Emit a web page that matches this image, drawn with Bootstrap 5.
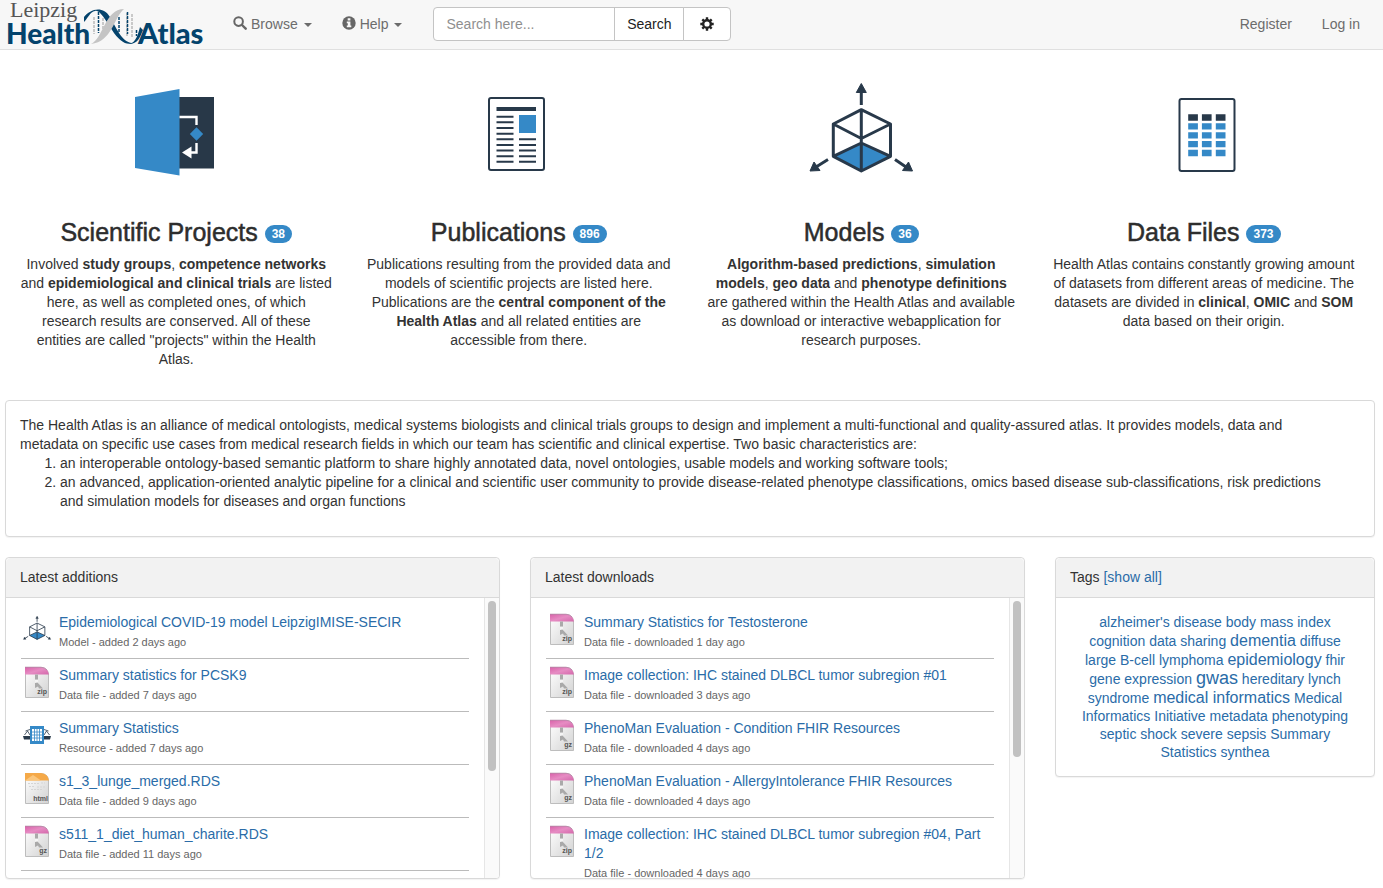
<!DOCTYPE html>
<html lang="en">
<head>
<meta charset="utf-8">
<meta name="viewport" content="width=device-width, initial-scale=1">
<title>Leipzig Health Atlas</title>
<link href="https://cdn.jsdelivr.net/npm/bootstrap@5.3.0/dist/css/bootstrap.min.css" rel="stylesheet">
<style>
  body { font-family: "Liberation Sans", Arial, sans-serif; font-size: 14px; line-height: 19px; color: #333; background: #fff; }
  a { color: #2a6ca8; text-decoration: none; }
  a:hover { text-decoration: underline; }
  .site-bar { background: #f7f7f7; border-bottom: 1px solid #e0e0e0; padding: 0 8px 1px 5px; min-height: 50px; }
  .site-bar .navbar-brand { padding: 0; margin: 0 13px 0 0; }
  .site-bar .navbar-brand svg { overflow: visible; }
  .site-bar .navbar-nav .nav-link { color: #6c6c6c; padding: 14px 15px; line-height: 20px; }
  .site-bar .nav-link svg { margin-right: 4px; vertical-align: -1px; }
  .site-bar .dropdown-toggle::after { border-top-width: 4px; border-right-width: 4px; border-left-width: 4px; margin-left: 6px; vertical-align: 2px; }
  .site-search { margin-left: 16px; width: 298px; }
  .site-search .form-control { height: 34px; font-size: 14px; padding: 6px 12px; border-color: #c4c4c4; border-radius: 4px; }
  .site-search .form-control::placeholder { color: #8f8f8f; }
  .site-search .btn { font-size: 14px; line-height: 20px; padding: 6px 12px; color: #222; background: #fff; border-color: #c4c4c4; border-radius: 4px; }
  .site-search .btn-gear { padding: 6px 16px; }
  .page-area { padding: 22px 8px 8px 5px; }
  .wide-row { --bs-gutter-x: 30px; }
  .area-icon { display: block; width: 120px; height: 120px; margin: 0 auto 26px; }
  .area-title { font-size: 25px; line-height: 28px; font-weight: 500; margin: 0 0 9px; color: #2d2d2d; -webkit-text-stroke: .5px #2d2d2d; }
  .count-badge { font-size: 12px; line-height: 12px; padding: 3px 7px; background: #3589c7; border-radius: 10px; vertical-align: 3px; -webkit-text-stroke: 0; }
  .area-text { padding: 0 15px; margin: 0 0 31px; }
  .panel-card { border: 1px solid #d9d9d9; border-radius: 4px; box-shadow: 0 1px 1px rgba(0,0,0,.05); overflow: hidden; }
  .panel-card .card-header { background: #f2f2f2; border-bottom: 1px solid #d9d9d9; padding: 10px 14px; }
  .panel-card .card-body { padding: 15px 14px; }
  .panel-card .intro-body { padding-right: 34px; }
  .intro-body ol { padding-left: 40px; margin-bottom: 10px; }
  .feed { height: 280px; }
  .feed-list { flex: 1; min-width: 0; overflow-y: auto; scrollbar-width: none; padding: 8px 15px 0; }
  .feed-bar { width: 15px; background: #fafafa; border-left: 1px solid #e6e6e6; padding: 3px; }
  .feed-thumb { width: 8px; height: 62%; background: #c1c1c1; border-radius: 4px; }
  .feed-thumb-short { height: 57%; }
  .feed-item { display: flex; gap: 6px; padding: 7px 0 5px; border-bottom: 1px solid #bbb; }
  .feed-item svg { flex: none; width: 32px; height: 34px; margin-top: -1px; }
  .feed-meta { font-size: 11px; line-height: 21px; color: #666; display: block; }
  .panel-card .tag-cloud { line-height: 18px; text-align: center; padding: 15px 20px; }
  .tag-m { font-size: 16px; line-height: 19px; }
  .tag-l { font-size: 18px; line-height: 18px; }
</style>
</head>
<body>

<svg width="0" height="0" class="position-absolute" aria-hidden="true">
  <defs>
    <linearGradient id="paper" x1="0" y1="0" x2="1" y2="1"><stop offset="0" stop-color="#fff"/><stop offset="1" stop-color="#d2d2d2"/></linearGradient>
    <linearGradient id="pink" x1="0" y1="0" x2="1" y2="1"><stop offset="0" stop-color="#d860a8"/><stop offset=".5" stop-color="#e68cc3"/><stop offset="1" stop-color="#d468ab"/></linearGradient>
    <symbol id="model" viewBox="0 0 120 120">
      <path d="M60.3 71 89.5 84.3 60.3 99 32.3 84.3Z" fill="#3589c7"/>
      <g fill="none" stroke="#28394a" stroke-width="3" stroke-linejoin="round">
        <path d="M60.3 37.7 89.5 52V84.3L60.3 99 32.3 84.3V52ZV99M32.3 52 60.3 66.5 89.5 52M32.3 84.3 60.3 71 89.5 84.3M60.3 33V18M27 87.500 15 95M94 87.500 105 95"/>
      </g>
      <path d="M60.300 11.500 65.300 20.500H55.300ZM9 99 13 90 19 98.500ZM111.500 99 101.500 98.500 107.500 90Z" fill="#28394a" stroke="#28394a" stroke-linejoin="round"/>
    </symbol>
    <symbol id="sheet" viewBox="0 0 32 34">
      <path d="M4.500 2.500H20Q27.500 3 27.500 10V32.500H4.500Z" fill="url(#paper)" stroke="#bdbdbd"/>
    </symbol>
    <symbol id="archive" viewBox="0 0 32 34">
      <use href="#sheet"/>
      <path d="M4 2H20Q27 2.500 28 9.500H4Z" fill="url(#pink)"/>
      <path d="M4 2.200H20Q24 2.500 26 5" fill="none" stroke="#b08aa4" stroke-width=".8"/>
      <path d="M14 9.500H17V14.500H14Z" fill="#aaa"/><path d="M14 15H17V18H14Z" fill="#f5f5f5"/>
      <path d="M14 18 16.500 17.500 22 23.500H18L17 21.500 14 23Z" fill="#a9a9a9"/>
    </symbol>
    <symbol id="zip" viewBox="0 0 32 34"><use href="#archive"/><text x="26" y="29" text-anchor="end" font-size="7" font-weight="700" fill="#555">zip</text></symbol>
    <symbol id="gz" viewBox="0 0 32 34"><use href="#archive"/><text x="26" y="29" text-anchor="end" font-size="7" font-weight="700" fill="#555">gz</text></symbol>
    <symbol id="html" viewBox="0 0 32 34">
      <use href="#sheet"/><path d="M4 2H20Q27 2.500 28 9.500H4Z" fill="#f5a948"/>
      <path d="M4 9.500 12 4 20 9.500Z" fill="#fbc67c"/>
      <path d="M7 12.500H18M20 12H24M8 15.500H14M16 16H24M10 18.500H22" stroke="#d5d5d5" stroke-dasharray="2 1"/>
      <text x="27" y="30" text-anchor="end" font-size="7" font-weight="700" fill="#555">html</text>
    </symbol>
    <symbol id="resource" viewBox="0 0 32 34">
      <path d="M2 18H30L29 21.500H3Z" fill="#28394a"/>
      <path d="M3.500 17 6.500 13 9 17M23 17 25.500 13 28.500 17M4.500 13 9 11.500M27.500 13 23 11.500" fill="none" stroke="#28394a" stroke-width=".8"/>
      <path d="M9 8H23V26H9Z" fill="#3589c7"/>
      <path d="M11 11H21V23H11Z" fill="#fff"/>
      <path d="M11 14H21M11 17H21M11 20H21M13.500 11V23M16 11V23M18.500 11V23" stroke="#3589c7" stroke-width=".8"/>
    </symbol>
  </defs>
</svg>

<nav class="navbar navbar-expand site-bar">
  <a class="navbar-brand" href="#" aria-label="Leipzig Health Atlas">
    <svg width="200" height="48" viewBox="5 0 200 48" class="d-block">
      <path d="M94 17V34M103 18V32M127 13V36M132 14V38" stroke="#bbb" stroke-width="1.500" stroke-dasharray="3 1"/>
      <path d="M98.500 12V33M119 17V32M127.500 12V34M136.500 30V36" stroke="#04436c" stroke-width="1.500" stroke-dasharray="3 1"/>
      <path d="M84 22V17C90 9 103 5 110 17 117 29 122 42 132 43 127 46 119 41 112 30 105 19 99 9 95 11 90 12 88 18 84 22ZM129 44C136 43 138 34 140 27L143 30C140 37 138 44 129 44Z" fill="#04436c"/>
      <path d="M91 44C103 39 105 9 124 9 114 17 112 42 91 44Z" fill="#c4c4c4"/>
      <text x="10" y="17" font-family="Liberation Serif, serif" font-size="22" fill="#555">Leipzig</text>
      <text x="6" y="44" font-family="Lato, sans-serif" font-weight="900" font-size="28" fill="#04436c">Health</text>
      <text x="138" y="44" font-family="Lato, sans-serif" font-weight="900" font-size="29" fill="#04436c">Atlas</text>
    </svg>
  </a>
  <ul class="navbar-nav">
    <li class="nav-item"><a class="nav-link dropdown-toggle" href="#" role="button" data-bs-toggle="dropdown"><svg width="14" height="14" viewBox="0 0 14 14"><circle cx="5.600" cy="5.600" r="4.300" fill="none" stroke="#666" stroke-width="2"/><path d="M9 9 12.700 12.700" stroke="#666" stroke-width="2.400" stroke-linecap="round"/></svg>Browse</a></li>
    <li class="nav-item"><a class="nav-link dropdown-toggle" href="#" role="button" data-bs-toggle="dropdown"><svg width="14" height="14" viewBox="0 0 14 14"><circle cx="7" cy="7" r="6.700" fill="#666"/><path d="M5.700 2.200H8.400V4.400H5.700ZM4.800 5.600H8.400V9.600H9.300V11.200H4.800V9.600H5.800V7.200H4.800Z" fill="#f7f7f7"/></svg>Help</a></li>
  </ul>
  <form class="site-search input-group flex-nowrap" role="search">
    <input type="text" class="form-control" placeholder="Search here..." aria-label="Search">
    <button type="button" class="btn">Search</button>
    <button type="button" class="btn btn-gear" aria-label="Search options"><svg width="14" height="14" viewBox="0 0 14 14" class="d-block"><circle cx="7" cy="7" r="3.800" fill="none" stroke="#222" stroke-width="2.400"/><path d="M7 .3V3M7 11V13.700M.3 7H3M11 7H13.700M2.300 2.300 4 4M10 10 11.700 11.700M2.300 11.700 4 10M10 4 11.700 2.300" stroke="#222" stroke-width="2.400"/></svg></button>
  </form>
  <ul class="navbar-nav ms-auto">
    <li class="nav-item"><a class="nav-link" href="#">Register</a></li>
    <li class="nav-item"><a class="nav-link" href="#">Log in</a></li>
  </ul>
</nav>

<main class="page-area">
  <div class="row g-0 text-center">
    <section class="col-3">
      <svg class="area-icon" viewBox="0 0 120 120">
        <path d="M62 25H98V96.500H62Z" fill="#283848"/><path d="M19 25 63.500 17V103.500L19 96Z" fill="#3589c7"/>
        <path d="M63.500 45H80.500V53M80.500 71V80.500H74" fill="none" stroke="#fff" stroke-width="2.400"/>
        <path d="M66 80.500 75.500 74.500V86.500Z" fill="#fff"/><path d="M80.500 55.300 87.200 62 80.500 68.700 73.800 62Z" fill="#3589c7"/>
      </svg>
      <h3 class="area-title">Scientific Projects <span class="badge count-badge">38</span></h3>
      <p class="area-text">Involved <b>study groups</b>, <b>competence networks</b> and <b>epidemiological and clinical trials</b> are listed here, as well as completed ones, of which research results are conserved. All of these entities are called "projects" within the Health Atlas.</p>
    </section>
    <section class="col-3">
      <svg class="area-icon" viewBox="0 0 120 120">
        <rect x="30" y="26" width="55" height="72" rx="2" fill="#fff" stroke="#28394a" stroke-width="2"/>
        <path d="M37.500 35H77V39H37.500Z" fill="#28394a"/><path d="M60 43H77V61H60Z" fill="#3589c7"/>
        <path d="M37.500 44.700h17M37.500 50.300h17M37.500 56h17M37.500 61.700h17M37.500 67.300h17M37.500 73h17M37.500 78.500h17M37.500 84.300h17M37.500 89.800h17M60 67.300h17M60 73h17M60 78.500h17M60 84.300h17M60 89.800h17" stroke="#28394a" stroke-width="2"/>
      </svg>
      <h3 class="area-title">Publications <span class="badge count-badge">896</span></h3>
      <p class="area-text">Publications resulting from the provided data and models of scientific projects are listed here. Publications are the <b>central component of the Health Atlas</b> and all related entities are accessible from there.</p>
    </section>
    <section class="col-3">
      <svg class="area-icon"><use href="#model"/></svg>
      <h3 class="area-title">Models <span class="badge count-badge">36</span></h3>
      <p class="area-text"><b>Algorithm-based predictions</b>, <b>simulation models</b>, <b>geo data</b> and <b>phenotype definitions</b> are gathered within the Health Atlas and available as download or interactive webapplication for research purposes.</p>
    </section>
    <section class="col-3">
      <svg class="area-icon" viewBox="0 0 120 120">
        <rect x="35.500" y="27" width="55" height="72" rx="2" fill="#fff" stroke="#28394a" stroke-width="2"/>
        <path d="M44.200 45.500h9.700m4 0h9.700m4.200 0h9.700" stroke="#28394a" stroke-width="6.300"/>
        <path d="M44.200 54.400h9.700m4 0h9.700m4.200 0h9.700M44.200 63.300h9.700m4 0h9.700m4.200 0h9.700M44.200 72.200h9.700m4 0h9.700m4.200 0h9.700M44.200 81h9.700m4 0h9.700m4.200 0h9.700" stroke="#3589c7" stroke-width="6.300"/>
      </svg>
      <h3 class="area-title">Data Files <span class="badge count-badge">373</span></h3>
      <p class="area-text">Health Atlas contains constantly growing amount of datasets from different areas of medicine. The datasets are divided in <b>clinical</b>, <b>OMIC</b> and <b>SOM</b> data based on their origin.</p>
    </section>
  </div>

  <div class="card panel-card">
    <div class="card-body intro-body">
      The Health Atlas is an alliance of medical ontologists, medical systems biologists and clinical trials groups to design and implement a multi-functional and quality-assured atlas. It provides models, data and metadata on specific use cases from medical research fields in which our team has scientific and clinical expertise. Two basic characteristics are:
      <ol>
        <li>an interoperable ontology-based semantic platform to share highly annotated data, novel ontologies, usable models and working software tools;</li>
        <li>an advanced, application-oriented analytic pipeline for a clinical and scientific user community to provide disease-related phenotype classifications, omics based disease sub-classifications, risk predictions and simulation models for diseases and organ functions</li>
      </ol>
    </div>
  </div>

  <div class="row wide-row mt-1 pt-3">
    <div class="col-9">
      <div class="row wide-row">
        <div class="col-6">
          <div class="card panel-card">
            <div class="card-header">Latest additions</div>
            <div class="feed d-flex">
              <div class="feed-list">
                <div class="feed-item"><svg><use href="#model"/></svg><div><a href="#">Epidemiological COVID-19 model LeipzigIMISE-SECIR</a><span class="feed-meta">Model - added 2 days ago</span></div></div>
                <div class="feed-item"><svg><use href="#zip"/></svg><div><a href="#">Summary statistics for PCSK9</a><span class="feed-meta">Data file - added 7 days ago</span></div></div>
                <div class="feed-item"><svg><use href="#resource"/></svg><div><a href="#">Summary Statistics</a><span class="feed-meta">Resource - added 7 days ago</span></div></div>
                <div class="feed-item"><svg><use href="#html"/></svg><div><a href="#">s1_3_lunge_merged.RDS</a><span class="feed-meta">Data file - added 9 days ago</span></div></div>
                <div class="feed-item"><svg><use href="#gz"/></svg><div><a href="#">s511_1_diet_human_charite.RDS</a><span class="feed-meta">Data file - added 11 days ago</span></div></div>
              </div>
              <div class="feed-bar"><div class="feed-thumb"></div></div>
            </div>
          </div>
        </div>
        <div class="col-6">
          <div class="card panel-card">
            <div class="card-header">Latest downloads</div>
            <div class="feed d-flex">
              <div class="feed-list">
                <div class="feed-item"><svg><use href="#zip"/></svg><div><a href="#">Summary Statistics for Testosterone</a><span class="feed-meta">Data file - downloaded 1 day ago</span></div></div>
                <div class="feed-item"><svg><use href="#zip"/></svg><div><a href="#">Image collection: IHC stained DLBCL tumor subregion #01</a><span class="feed-meta">Data file - downloaded 3 days ago</span></div></div>
                <div class="feed-item"><svg><use href="#gz"/></svg><div><a href="#">PhenoMan Evaluation - Condition FHIR Resources</a><span class="feed-meta">Data file - downloaded 4 days ago</span></div></div>
                <div class="feed-item"><svg><use href="#gz"/></svg><div><a href="#">PhenoMan Evaluation - AllergyIntolerance FHIR Resources</a><span class="feed-meta">Data file - downloaded 4 days ago</span></div></div>
                <div class="feed-item"><svg><use href="#zip"/></svg><div><a href="#">Image collection: IHC stained DLBCL tumor subregion #04, Part 1/2</a><span class="feed-meta">Data file - downloaded 4 days ago</span></div></div>
              </div>
              <div class="feed-bar"><div class="feed-thumb feed-thumb-short"></div></div>
            </div>
          </div>
        </div>
      </div>
    </div>
    <div class="col-3">
      <div class="card panel-card">
        <div class="card-header">Tags <a href="#">[show all]</a></div>
        <div class="card-body tag-cloud">
          <a href="#">alzheimer's disease</a> <a href="#">body mass index</a> <a href="#">cognition</a> <a href="#">data sharing</a> <a href="#" class="tag-m">dementia</a> <a href="#">diffuse large B-cell lymphoma</a> <a href="#" class="tag-m">epidemiology</a> <a href="#">fhir</a> <a href="#">gene expression</a> <a href="#" class="tag-l">gwas</a> <a href="#">hereditary</a> <a href="#">lynch syndrome</a> <a href="#" class="tag-m">medical informatics</a> <a href="#">Medical Informatics Initiative</a> <a href="#">metadata</a> <a href="#">phenotyping</a> <a href="#">septic shock</a> <a href="#">severe sepsis</a> <a href="#">Summary Statistics</a> <a href="#">synthea</a>
        </div>
      </div>
    </div>
  </div>
</main>
<script src="https://cdn.jsdelivr.net/npm/bootstrap@5.3.0/dist/js/bootstrap.bundle.min.js"></script>
</body>
</html>
